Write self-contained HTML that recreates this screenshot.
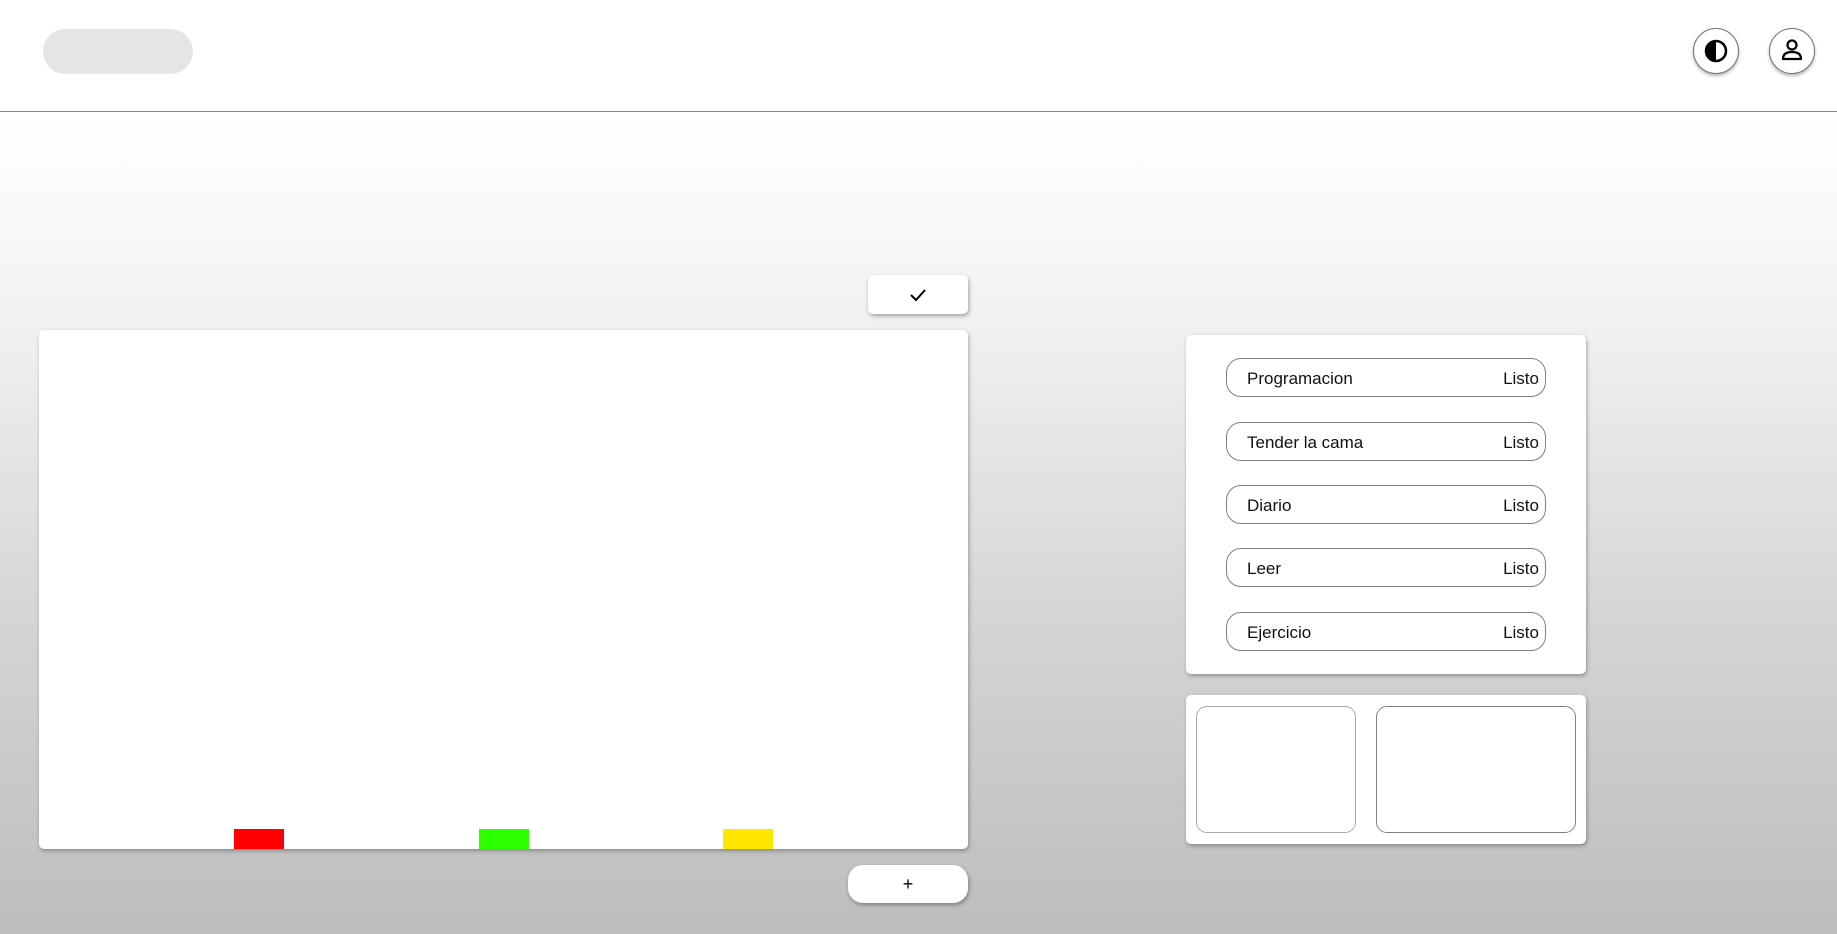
<!DOCTYPE html>
<html><head><meta charset="utf-8">
<style>
*{margin:0;padding:0;box-sizing:border-box}
html,body{width:1837px;height:934px;overflow:hidden}
body{position:relative;font-family:"Liberation Sans",sans-serif;background:#fff}
.bg{position:absolute;left:0;top:112px;width:1837px;height:822px;background:linear-gradient(#fff 0%,#fcfcfc 8%,#eeeeee 30%,#d6d6d6 60%,#bdbdbd 100%)}
.hdr-line{position:absolute;left:0;top:111px;width:1837px;height:1px;background:#888}
.pill{position:absolute;left:43px;top:29px;width:150px;height:45px;border-radius:23px;background:#e5e5e5}
.circ{position:absolute;top:28px;width:46px;height:46px;border-radius:50%;background:#fff;border:1px solid #777;box-shadow:0 2px 3px rgba(0,0,0,.3)}
.card{position:absolute;background:#fff;border-radius:5px;box-shadow:1px 2px 4px rgba(0,0,0,.3)}
.btn{position:absolute;background:#fff;box-shadow:1px 2px 4px rgba(0,0,0,.35);display:flex;align-items:center;justify-content:center}
.bar{position:absolute;top:829px;width:50px;height:20px}
.task{position:absolute;left:1226px;width:320px;height:39px;border:1px solid #808080;border-radius:15px;font-size:17px;color:#111;display:flex;align-items:center;justify-content:space-between;padding:2px 6px 0 20px}
.box{position:absolute;top:706px;height:127px;border-radius:11px}
</style></head><body>
<div class="bg"></div>
<div class="hdr-line"></div>
<div class="pill"></div>
<div class="circ" style="left:1693px">
<svg width="46" height="46" viewBox="0 0 46 46" style="position:absolute;left:-1px;top:-1px"><circle cx="23" cy="23" r="10" fill="none" stroke="#000" stroke-width="2.5"/><path d="M23 13 A10 10 0 0 0 23 33 Z" fill="#000"/></svg>
</div>
<div class="circ" style="left:1769px">
<svg width="46" height="46" viewBox="0 0 46 46" style="position:absolute;left:-1px;top:-1px"><circle cx="23" cy="17" r="4.5" fill="none" stroke="#000" stroke-width="2.2"/><path d="M14 31 Q14 24 23 24 Q32 24 32 31 Z" fill="none" stroke="#000" stroke-width="2.2" stroke-linejoin="round"/></svg>
</div>

<div class="btn" style="left:868px;top:275px;width:100px;height:39px;border-radius:5px">
<svg width="18" height="14" viewBox="0 0 18 14"><path d="M2 7 L7 12 L16 2" fill="none" stroke="#000" stroke-width="2"/></svg>
</div>
<div class="card" style="left:39px;top:330px;width:929px;height:519px"></div>
<div class="bar" style="left:234px;background:#ff0000"></div>
<div class="bar" style="left:479px;background:#2bff00"></div>
<div class="bar" style="left:723px;background:#ffe600"></div>
<div class="btn" style="left:848px;top:865px;width:120px;height:38px;border-radius:15px;font-size:18px;color:#000">+</div>

<div class="card" style="left:1186px;top:335px;width:400px;height:339px"></div>
<div class="task" style="top:358px"><span>Programacion</span><span>Listo</span></div>
<div class="task" style="top:422px"><span>Tender la cama</span><span>Listo</span></div>
<div class="task" style="top:485px"><span>Diario</span><span>Listo</span></div>
<div class="task" style="top:548px"><span>Leer</span><span>Listo</span></div>
<div class="task" style="top:612px"><span>Ejercicio</span><span>Listo</span></div>

<div class="card" style="left:1186px;top:695px;width:400px;height:149px"></div>
<div class="box" style="left:1196px;width:160px;border:1px solid #aaa"></div>
<div class="box" style="left:1376px;width:200px;border:1px solid #808080"></div>
</body></html>
